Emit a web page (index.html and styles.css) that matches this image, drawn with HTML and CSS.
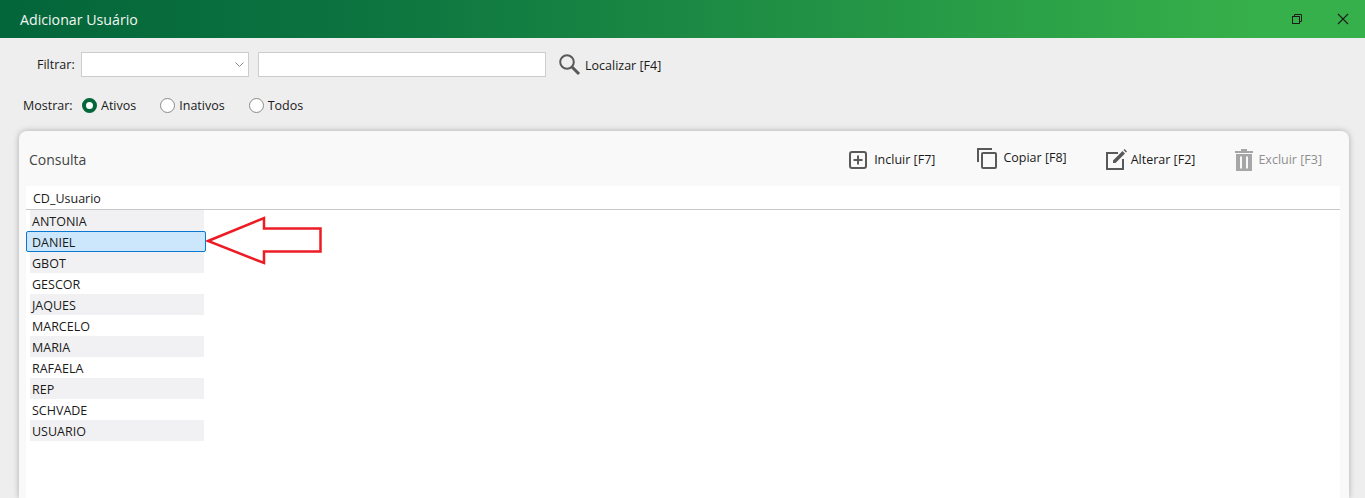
FILE: index.html
```html
<!DOCTYPE html>
<html lang="pt-BR">
<head>
<meta charset="UTF-8">
<meta name="viewport" content="width=device-width,initial-scale=1.0">
<title>Adicionar Usuário</title>
<link rel="stylesheet" href="styles.css">
</head>
<body>

<header class="titlebar">
  <div class="title">Adicionar Usuário</div>
  <div class="win-btns">
    <svg class="win-icon" width="12" height="12" viewBox="0 0 12 12" fill="none" stroke="#1c1c1c" stroke-width="1">
      <rect x="1.5" y="3.5" width="7" height="7"/>
      <path d="M3.5 3.5V1.5H10.5V8.5H8.5"/>
    </svg>
    <svg class="win-icon" width="12" height="12" viewBox="0 0 12 12" fill="none" stroke="#1c1c1c" stroke-width="1.1">
      <path d="M1 1L11 11M11 1L1 11"/>
    </svg>
  </div>
</header>

<section class="filters">
  <div class="filter-row">
    <label class="filter-label">Filtrar:</label>
    <div class="select">
      <svg width="9" height="5" viewBox="0 0 9 5" fill="none" stroke="#8a8a8a" stroke-width="1"><path d="M.5 .5L4.500 4.500L8.500 .5"/></svg>
    </div>
    <div class="input"></div>
    <button class="find-btn">
      <svg width="23" height="23" viewBox="0 0 23 23" fill="none" stroke="#595959">
        <circle cx="9" cy="9" r="6.8" stroke-width="2"/>
        <path d="M14 14L21 21" stroke-width="3"/>
      </svg>
      <span>Localizar [F4]</span>
    </button>
  </div>
  <div class="show-row">
    <span class="show-label">Mostrar:</span>
    <span class="radio checked"><i></i>Ativos</span>
    <span class="radio"><i></i>Inativos</span>
    <span class="radio"><i></i>Todos</span>
  </div>
</section>

<main class="card">
  <div class="toolbar">
    <div class="card-title">Consulta</div>
    <div class="actions">
      <button class="action act-add">
        <svg width="20" height="20" viewBox="0 0 20 20" fill="none" stroke="#595959" stroke-width="2">
          <rect x="2" y="2" width="16" height="16" rx="2"/>
          <path d="M10 5.500V14.500M5.500 10H14.500"/>
        </svg>
        Incluir [F7]
      </button>
      <button class="action act-copy">
        <svg width="22" height="22" viewBox="0 0 22 22" fill="none" stroke="#595959" stroke-width="2">
          <path d="M2 15V2H16"/>
          <rect x="6" y="6" width="14" height="15" rx="1"/>
        </svg>
        Copiar [F8]
      </button>
      <button class="action act-edit">
        <svg width="22" height="22" viewBox="0 0 22 22" fill="none">
          <path d="M13 4H2V20H18V10" stroke="#595959" stroke-width="2"/>
          <path d="M8 14V11.500L17.500 2L20 4.500L10.500 14Z M18.500 1L19.500 0L22 2.500L21 3.500Z" fill="#595959"/>
        </svg>
        Alterar [F2]
      </button>
      <button class="action act-del">
        <svg width="18" height="22" viewBox="0 0 18 22" fill="#a6a6a6">
          <path d="M6 0H12V2H18V4H0V2H6Z"/>
          <path d="M1 5H17V22H1ZM5 7.500V19.500H7V7.500ZM11 7.500V19.500H13V7.500Z" fill-rule="evenodd"/>
        </svg>
        Excluir [F3]
      </button>
    </div>
  </div>

  <div class="grid">
    <div class="grid-head">CD_Usuario</div>
    <ul class="rows">
      <li class="alt">ANTONIA</li>
      <li class="selected">DANIEL</li>
      <li class="alt">GBOT</li>
      <li>GESCOR</li>
      <li class="alt">JAQUES</li>
      <li>MARCELO</li>
      <li class="alt">MARIA</li>
      <li>RAFAELA</li>
      <li class="alt">REP</li>
      <li>SCHVADE</li>
      <li class="alt">USUARIO</li>
    </ul>
  </div>
</main>

<!-- red annotation arrow drawn over the grid -->
<svg class="arrow" width="120" height="52" viewBox="206 215 120 52" fill="none" stroke="#ed1c24" stroke-width="2.500">
  <path d="M208 241L264 218V228.500H320.500V251.500H264V263Z"/>
</svg>

</body>
</html>
```

FILE: styles.css
```css
html,body{
  margin:0;
  padding:0;
  height:100%;
  overflow:hidden;
  background:#eeeeee;
  color:#1a1a1a;
  font-family:"Open Sans","Noto Sans",sans-serif;
  font-size:12.5px;
}
button{
  font:inherit;
  color:inherit;
  background:none;
  border:0;
  padding:0;
  display:flex;
  align-items:center;
}

/* ----------  TITLE BAR  ---------- */
.titlebar{
  height:38px;
  display:flex;
  align-items:center;
  justify-content:space-between;
  padding:0 16px 0 20px;
  background:linear-gradient(90deg,#03653a 0%,#0d7540 28%,#36b04a 92%);
}
.title{
  color:#f2f7f3;
  font-size:14.2px;
}
.win-btns{
  display:flex;
  gap:34px;
}

/* ----------  FILTERS  ---------- */
.filters{
  height:93px;
}
.filter-row{
  display:flex;
  align-items:center;
  padding:14px 0 0 37px;
  height:25px;
}
.filter-label{
  width:44px;
}
.select,.input{
  box-sizing:border-box;
  height:25px;
  background:#fff;
  border:1px solid #cccccc;
  display:flex;
  align-items:center;
  justify-content:flex-end;
}
.select{
  width:168px;
  padding-right:4px;
  margin-right:9px;
}
.input{
  width:288px;
  margin-right:12px;
}
.find-btn{
  gap:4px;
}
.find-btn span{
  padding-top:2px;
}
.show-row{
  display:flex;
  align-items:center;
  padding:16px 0 0 23px;
  height:24px;
}
.show-label{
  width:59px;
}
.radio{
  display:flex;
  align-items:center;
  gap:4px;
  margin-right:24px;
}
.radio i{
  box-sizing:border-box;
  width:15px;
  height:15px;
  border:1px solid #8a8a8a;
  border-radius:50%;
  background:#fff;
}
.radio.checked i{
  border:4px solid #03653a;
}

/* ----------  CARD  ---------- */
.card{
  margin:0 16px 0 19px;
  height:367px;
  background:#f9f9f9;
  border-radius:8px 8px 0 0;
  box-shadow:0 0 6px rgba(0,0,0,.28);
  padding:0 9px 0 7px;
}
.toolbar{
  box-sizing:border-box;
  height:55px;
  display:flex;
  align-items:center;
  justify-content:space-between;
  padding:2px 18px 0 3px;
}
.card-title{
  font-size:14px;
  color:#444;
}
.actions{
  display:flex;
  align-items:center;
}
.action{
  gap:6px;
}
.act-add{margin-right:41px;}
.act-copy{margin:0 38px 4px 0;gap:5px;}
.act-edit{margin-right:40px;gap:4px;}
.act-del{color:#8f8f8f;gap:5px;}

.grid{
  background:#fff;
  height:312px;
}
.grid-head{
  height:23px;
  line-height:25px;
  padding-left:7px;
  border-bottom:1px solid #c8c8c8;
}
.rows{
  list-style:none;
  margin:0;
  padding:0;
}
.rows li{
  box-sizing:border-box;
  width:174px;
  height:21px;
  line-height:23px;
  margin-left:4px;
  padding-left:2px;
}
.rows li.alt{
  background:#f1f1f3;
}
.rows li.selected{
  width:180px;
  margin-left:0;
  padding-left:5px;
  line-height:21px;
  background:#cce6fb;
  border:1px solid #0a78d0;
  border-radius:2px;
}

/* annotation */
.arrow{
  position:absolute;
  left:206px;
  top:215px;
}
```
